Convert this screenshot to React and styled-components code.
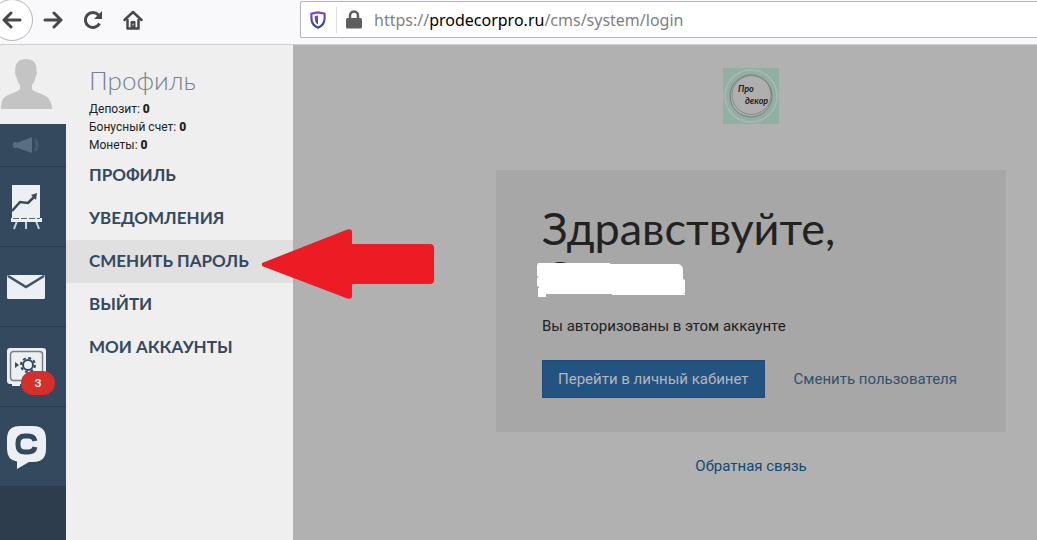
import React from "react";
import styled, { createGlobalStyle, css } from "styled-components";

const GlobalStyle = createGlobalStyle`
  * { box-sizing: border-box; }
  body {
    margin: 0;
    background: #b1b1b1;
    font-family: Lato, "Open Sans", "Noto Sans", sans-serif;
    color: #222;
  }
  h1, h2, p, ul { margin: 0; padding: 0; font-weight: 400; }
  ul { list-style: none; }
  a { text-decoration: none; }
  button { font: inherit; cursor: pointer; }
  svg { display: block; flex: none; }
`;

const Page = styled.div`
  display: flex;
  flex-direction: column;
  min-height: 100vh;
  overflow: hidden;
`;

const Toolbar = styled.header`
  display: flex;
  align-items: flex-start;
  height: 45px;
  background: #f9f9fb;
  border-bottom: 1px solid #d0d0d2;
`;

const NavButtons = styled.div`
  display: flex;
  flex: none;
  width: 300px;
`;

const NavButton = styled.button`
  display: flex;
  align-items: center;
  justify-content: center;
  width: 40px;
  height: 40px;
  padding: 0;
  border: 0;
  background: none;
  color: #48484b;
`;

const BackButton = styled(NavButton)`
  width: 42px;
  height: 42px;
  margin: -1px 0 0 -9px;
  border: 1px solid #b5b5b8;
  border-radius: 50%;
  background: #fff;
`;

const AddressBar = styled.div`
  display: flex;
  flex: 1;
  align-items: center;
  min-width: 0;
  height: 37px;
  margin: 1px 0 0;
  padding-left: 9px;
  border: 1px solid #b4b4b8;
  border-right: 0;
  border-radius: 2px 0 0 2px;
  background: #fff;
`;

const Divider = styled.span`
  width: 1px;
  height: 26px;
  margin: 0 9px 0 10px;
  background: #dcdce0;
`;

const Address = styled.span`
  margin-left: 12px;
  font-family: "Noto Sans", "Open Sans", sans-serif;
  font-size: 16px;
  line-height: 24px;
  white-space: nowrap;
  color: #808084;

  b { font-weight: 400; color: #000; }
`;

const Body = styled.div`
  display: flex;
  flex: 1;
`;

const Rail = styled.nav`
  display: flex;
  flex: none;
  flex-direction: column;
  width: 66px;
  background: #2d3d4e;
`;

const Avatar = styled.a`
  display: flex;
  height: 79px;
  padding-top: 14px;
  background: #efefef;
`;

const RailItem = styled.a`
  position: relative;
  display: flex;
  align-items: center;
  height: ${(p) => (p.$short ? 43 : 80)}px;
  padding-left: ${(p) => (p.$short ? 12 : 6)}px;
  border-bottom: 1px solid #2a3c50;
  background: #34495e;
`;

const Badge = styled.span`
  position: absolute;
  left: 21px;
  bottom: 11px;
  width: 34px;
  height: 24px;
  border-radius: 12px;
  background: #d42f2b;
  color: #fff;
  font-size: 12px;
  font-weight: 700;
  line-height: 24px;
  text-align: center;
`;

const ProfilePanel = styled.aside`
  flex: none;
  width: 227px;
  padding-top: 18px;
  background: #efefef;
`;

const PanelTitle = styled.h2`
  margin-bottom: 2px;
  padding-left: 23px;
  font-size: 26px;
  font-weight: 300;
  line-height: 35px;
  color: #76808e;
`;

const Balance = styled.p`
  padding-left: 23px;
  font-family: Roboto, "Open Sans", sans-serif;
  font-size: 12px;
  line-height: 18px;
  color: #222;

  b { font-weight: 900; }
`;

const MenuItem = styled.li`
  position: relative;
  ${(p) => p.$active && css`background: #e0e0e0;`}
`;

const MenuLink = styled.a`
  display: block;
  padding: 0 0 1px 23px;
  font-size: 17px;
  font-weight: 700;
  line-height: 42px;
  color: #34495e;
  text-transform: uppercase;
`;

const Pointer = styled.svg`
  position: absolute;
  z-index: 1;
  top: -12px;
  left: 195px;
`;

const Main = styled.main`
  display: flex;
  flex: 1;
  flex-direction: column;
  align-items: flex-end;
  min-width: 0;
  padding: 23px 31px 0 0;
`;

const Content = styled.div`
  display: flex;
  flex-direction: column;
  align-items: center;
  width: 100%;
  max-width: 510px;
`;

const Card = styled.section`
  width: 100%;
  margin: 46px 0 24px;
  padding: 34px 46px;
  background: #a7a7a7;
`;

const Greeting = styled.h1`
  position: relative;
  margin-bottom: 12px;
  font-size: 45px;
  line-height: 49px;
  color: #222;
`;

const Cover = styled.svg`
  position: absolute;
  left: -6px;
  bottom: 4px;
`;

const Note = styled.p`
  margin-bottom: 22px;
  font-family: Roboto, "Open Sans", sans-serif;
  font-size: 15px;
  line-height: 24px;
`;

const Actions = styled.div`
  display: flex;
  align-items: center;
  gap: 29px;
  white-space: nowrap;
`;

const PrimaryButton = styled.button`
  height: 38px;
  padding: 0 15px;
  border: 1px solid #1f4b78;
  background: #235380;
  color: #b2b8be;
  font-family: Roboto, "Open Sans", sans-serif;
  font-size: 15px;
`;

const TextLink = styled.a`
  font-family: Roboto, "Open Sans", sans-serif;
  font-size: 15px;
  line-height: 20px;
  color: ${(p) => (p.$deep ? "#104a70" : "#2f526f")};
`;

const stroke = {
  fill: "none",
  stroke: "currentColor",
  strokeWidth: 3,
  strokeLinecap: "round",
  strokeLinejoin: "round",
};

const BackIcon = () => (
  <svg width="20" height="18" viewBox="0 0 20 18" {...stroke}>
    <path d="M18 9H2M9 2 2 9l7 7" />
  </svg>
);

const ForwardIcon = () => (
  <svg width="20" height="18" viewBox="0 0 20 18" {...stroke}>
    <path d="M2 9h16M11 2l7 7-7 7" />
  </svg>
);

const ReloadIcon = () => (
  <svg width="20" height="20" viewBox="0 0 20 20" {...stroke}>
    <path d="M16.500 13.500A7.500 7.500 0 1 1 15.500 5" strokeLinecap="butt" />
    <path d="M19 1v8h-8z" fill="currentColor" stroke="none" />
  </svg>
);

const HomeIcon = () => (
  <svg width="20" height="20" viewBox="0 0 20 20" {...stroke}>
    <path d="M1.500 10 10 2l8.500 8" strokeWidth="2.500" />
    <path d="M4.500 10v8.500h11V10" strokeWidth="2.500" />
    <path d="M8 18v-6.500h4V18z" fill="currentColor" strokeWidth="1" />
    <path d="M10 14v1" stroke="#f9f9fb" strokeWidth="1" />
  </svg>
);

const ShieldIcon = () => (
  <svg width="16" height="18" viewBox="0 0 16 18">
    <defs>
      <linearGradient id="shield" x1="0" y1="0" x2="0" y2="1">
        <stop offset="0" stopColor="#7e4fc4" />
        <stop offset="1" stopColor="#33479c" />
      </linearGradient>
    </defs>
    <path
      d="M8 1.300 14.600 2.600V7c0 5-2.500 8-6.600 9.700C3.900 15 1.400 12 1.400 7V2.600z"
      fill="#fff"
      stroke="url(#shield)"
      strokeWidth="2.200"
      strokeLinejoin="round"
    />
    <path d="M8 4.500v9C5.500 12 4.800 9.500 4.800 7V5z" fill="url(#shield)" />
  </svg>
);

const LockIcon = () => (
  <svg width="16" height="19" viewBox="0 0 16 19">
    <path d="M4 9V5.500a4 4 0 0 1 8 0V9" fill="none" stroke="#5e5e61" strokeWidth="2.500" />
    <rect y="8" width="16" height="10.500" rx="1.500" fill="#5e5e61" />
  </svg>
);

const PersonIcon = () => (
  <svg width="52" height="51" viewBox="0 0 52 51" fill="#c4c4c4">
    <path d="M26 0c7 0 10.500 4 10.500 10 0 2 .5 3 .3 5-.2 2-1.300 2-1.600 4-.4 3-1.700 5-3.200 7v4c1 3 14 5 17 10 2 3 3 6 3 10H1c0-4 .5-7 2-10 3-5 16-7 17-10v-4c-1.500-2-2.800-4-3.200-7-.3-2-1.400-2-1.600-4-.2-2 .1-3 .1-5C15.300 4 19 0 26 0z" />
  </svg>
);

const MegaphoneIcon = () => (
  <svg width="28" height="18" viewBox="0 0 28 18" fill="#5b6d81">
    <rect x="1" y="6" width="5" height="6" rx="2" />
    <path d="M6 6.500 20 1v16L6 12z" />
    <path d="M23 3q4 6 0 12" fill="none" stroke="#475b70" strokeWidth="3" />
  </svg>
);

const ChartIcon = () => (
  <svg width="36" height="46" viewBox="0 0 36 46">
    <path d="M6 1h28v34H6z" fill="#ecf0f2" />
    <path d="M11 37 8 45M20 37v8M30 37l3 8" stroke="#c9d2da" strokeWidth="2" />
    <path d="M5 34h31v4H5z" fill="#ecf0f2" />
    <path d="M7 34.500h27" stroke="#55677a" strokeDasharray="6 2" />
    <path d="m6 27 8-9 8 1 6-6" fill="none" stroke="#3c475c" strokeWidth="2.500" />
    <path d="m31 9-1 7-5-5z" fill="#3c475c" />
  </svg>
);

const MailIcon = () => (
  <svg width="40" height="24" viewBox="0 0 40 24">
    <rect x="1" y="0" width="38" height="24" rx="1.500" fill="#edf0f2" />
    <path d="m2 1 18 11L38 1" fill="none" stroke="#41536a" strokeWidth="2.500" />
  </svg>
);

const SafeIcon = () => (
  <svg width="40" height="40" viewBox="0 0 40 40">
    <path d="M6 36h8v3H6zM28 36h7v3h-7z" fill="#ecf0f2" />
    <rect x="1" y="1" width="39" height="36" rx="3" fill="#ecf0f2" />
    <rect x="4.500" y="4.500" width="32" height="29" rx="3" fill="none" stroke="#777f86" strokeWidth="1.500" />
    <circle cx="22" cy="18" r="5" fill="none" stroke="#34495e" strokeWidth="2" />
    <circle cx="22" cy="18" r="7" fill="none" stroke="#34495e" strokeWidth="2" strokeDasharray="3 2.500" />
    <path d="m9 15 4 3-4 3z" fill="#34495e" />
  </svg>
);

const ChatIcon = () => (
  <svg width="40" height="44" viewBox="0 0 40 44">
    <path
      d="M14 1h13q13 0 13 13v10q0 13-13 13h-4l-12 7V36.500Q1 35 1 24V14Q1 1 14 1z"
      fill="#edf0f2"
    />
    <path
      d="M29 16q-1-5-7-5h-3q-7 0-7 7v2q0 7 7 7h3q6 0 7-5"
      fill="none"
      stroke="#34495e"
      strokeWidth="5"
    />
  </svg>
);

const Logo = () => (
  <svg width="56" height="56" viewBox="0 0 56 56" role="img" aria-label="Про декор">
    <rect width="56" height="56" fill="#91b0a4" />
    <circle cx="28" cy="28" r="26" fill="none" stroke="#a9b9b2" strokeWidth="1.500" />
    <circle cx="28" cy="28" r="21" fill="#afafaf" stroke="#777b7a" strokeWidth="1" />
    <circle cx="28.500" cy="27" r="19.500" fill="none" stroke="#858887" strokeWidth="1" />
    <g fontFamily="Lato, sans-serif" fontStyle="italic" fontWeight="700" fontSize="9" fill="#222">
      <text x="15" y="24">Про</text>
      <text x="22" y="36">декор</text>
    </g>
  </svg>
);

const menu = ["Профиль", "Уведомления", "Сменить пароль", "Выйти", "Мои аккаунты"];
const balances = [["Депозит", 0], ["Бонусный счет", 0], ["Монеты", 0]];

export default function App() {
  return (
    <Page>
      <GlobalStyle />
      <Toolbar>
        <NavButtons>
          <BackButton aria-label="Назад"><BackIcon /></BackButton>
          <NavButton aria-label="Вперёд"><ForwardIcon /></NavButton>
          <NavButton aria-label="Обновить"><ReloadIcon /></NavButton>
          <NavButton aria-label="Домой"><HomeIcon /></NavButton>
        </NavButtons>
        <AddressBar>
          <ShieldIcon />
          <Divider />
          <LockIcon />
          <Address>https://<b>prodecorpro.ru</b>/cms/system/login</Address>
        </AddressBar>
      </Toolbar>
      <Body>
        <Rail>
          <Avatar href="#profile" aria-label="Профиль"><PersonIcon /></Avatar>
          <RailItem $short href="#news" aria-label="Новости"><MegaphoneIcon /></RailItem>
          <RailItem href="#stats" aria-label="Статистика"><ChartIcon /></RailItem>
          <RailItem href="#mail" aria-label="Сообщения"><MailIcon /></RailItem>
          <RailItem href="#safe" aria-label="Покупки"><SafeIcon /><Badge>3</Badge></RailItem>
          <RailItem href="#chat" aria-label="Чат"><ChatIcon /></RailItem>
        </Rail>
        <ProfilePanel>
          <PanelTitle>Профиль</PanelTitle>
          {balances.map(([label, value]) => (
            <Balance key={label}>{label}: <b>{value}</b></Balance>
          ))}
          <ul>
            {menu.map((label, i) => (
              <MenuItem key={label} $active={i === 2}>
                <MenuLink href="#menu">{label}</MenuLink>
                {i === 2 && (
                  <Pointer width="174" height="72" viewBox="0 0 174 72" aria-hidden="true">
                    <path
                      d="M1 35 85 2q6-2 6 2v12h78q4 0 4 4v32q0 4-4 4H91v12q0 4-6 2L1 38z"
                      fill="#ed1c24"
                    />
                  </Pointer>
                )}
              </MenuItem>
            ))}
          </ul>
        </ProfilePanel>
        <Main>
          <Content>
            <Logo />
            <Card>
              <Greeting>
                Здравствуйте,<br />С
                <Cover width="152" height="36" viewBox="0 0 152 36" aria-hidden="true">
                  <path
                    d="M2 1h72v1h67q5 0 6 5v10l2 1v13h-2l2 1v1H76v-1H10v3H2v-9l2-1-3-1v-8l2-1-2-1V6L1 4z"
                    fill="#fff"
                  />
                </Cover>
              </Greeting>
              <Note>Вы авторизованы в этом аккаунте</Note>
              <Actions>
                <PrimaryButton>Перейти в личный кабинет</PrimaryButton>
                <TextLink href="#switch">Сменить пользователя</TextLink>
              </Actions>
            </Card>
            <TextLink $deep href="#feedback">Обратная связь</TextLink>
          </Content>
        </Main>
      </Body>
    </Page>
  );
}
